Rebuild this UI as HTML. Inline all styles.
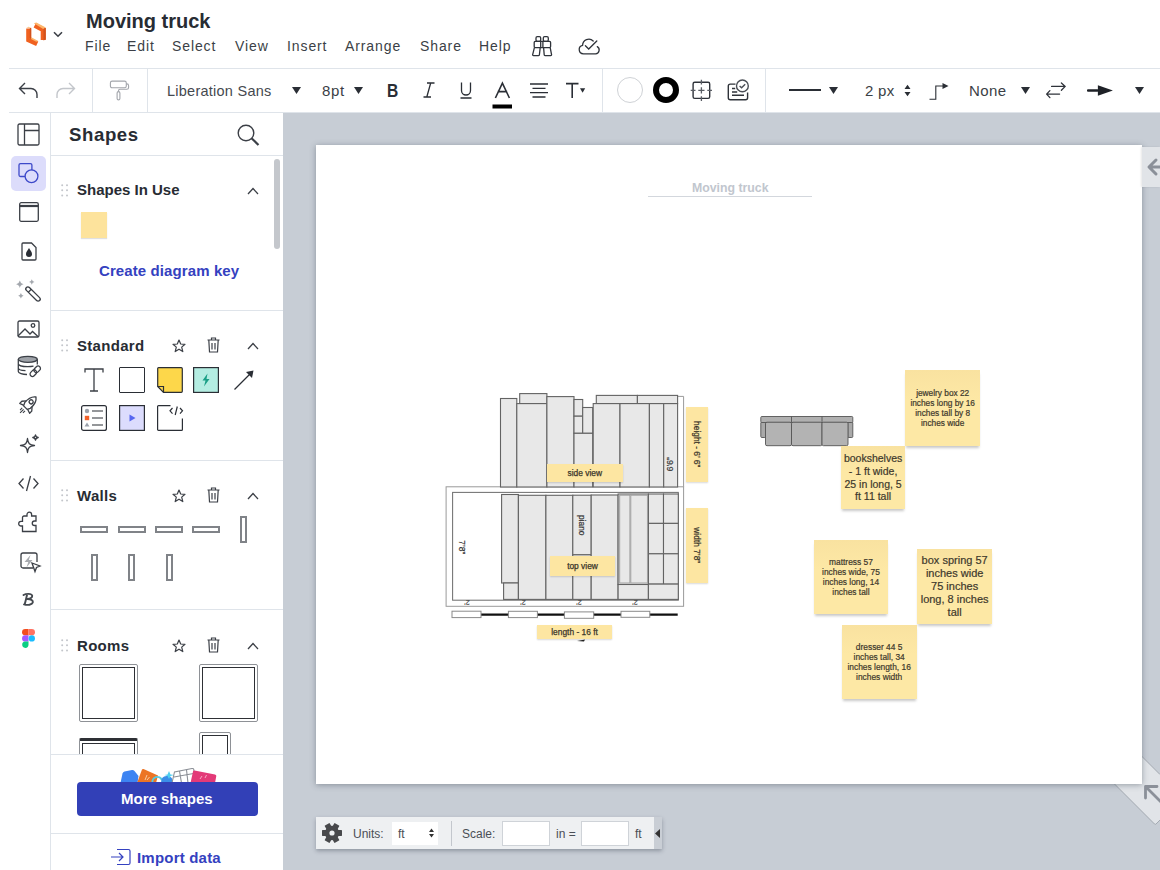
<!DOCTYPE html>
<html><head><meta charset="utf-8">
<style>
*{box-sizing:border-box;margin:0;padding:0}
html,body{width:1160px;height:870px;overflow:hidden;background:#fff;font-family:"Liberation Sans",sans-serif;color:#2a2e35}
.a{position:absolute}
.t{position:absolute;white-space:pre;line-height:1}
svg{position:absolute;overflow:visible}
</style></head><body>
<!-- HEADER -->
<div class="t" style="left:86px;top:11px;font-size:20px;font-weight:bold;color:#282c33">Moving truck</div>
<div class="t" style="left:85px;top:39px;font-size:14px;letter-spacing:0.9px;color:#3b3f46">File</div>
<div class="t" style="left:127px;top:39px;font-size:14px;letter-spacing:0.9px;color:#3b3f46">Edit</div>
<div class="t" style="left:172px;top:39px;font-size:14px;letter-spacing:0.9px;color:#3b3f46">Select</div>
<div class="t" style="left:235px;top:39px;font-size:14px;letter-spacing:0.9px;color:#3b3f46">View</div>
<div class="t" style="left:287px;top:39px;font-size:14px;letter-spacing:0.9px;color:#3b3f46">Insert</div>
<div class="t" style="left:345px;top:39px;font-size:14px;letter-spacing:0.9px;color:#3b3f46">Arrange</div>
<div class="t" style="left:420px;top:39px;font-size:14px;letter-spacing:0.9px;color:#3b3f46">Share</div>
<div class="t" style="left:479px;top:39px;font-size:14px;letter-spacing:0.9px;color:#3b3f46">Help</div>


<!-- logo -->
<svg style="left:22px;top:18px" width="30" height="30" viewBox="0 0 30 30">
  <path d="M6.7 10.5 V21.8 L15.2 25.8" fill="none" stroke="#f0611f" stroke-width="5" stroke-linejoin="miter"/>
  <path d="M4.2 9.8 L6.7 8.8 L9.2 9.8 Z M9.2 19.3 L16.3 22.9 L14.3 23.8 L7.5 20.3 Z" fill="#fdb56b"/>
  <path d="M12.8 7.3 L21.2 11.8 V22" fill="none" stroke="#f0611f" stroke-width="5" stroke-linejoin="miter"/>
  <path d="M11.8 5.3 L14.3 4.6 L23.8 9.6 L21.2 10.9 Z" fill="#fdb56b"/>
  <path d="M21.5 11 L23.8 9.8 V21.5 L21.5 22.5 Z" fill="#d2521c"/>
  <path d="M7.8 10.2 L9.2 9.8 V20.5 L7.8 21.2 Z" fill="#d2521c"/>
</svg>
<svg style="left:53px;top:31px" width="10" height="7" viewBox="0 0 10 7"><path d="M1 1.2 L5 5.2 L9 1.2" fill="none" stroke="#3b3f46" stroke-width="1.6"/></svg>
<!-- binoculars -->
<svg style="left:525px;top:30px" width="30" height="30" viewBox="0 0 30 30" fill="none" stroke="#2f333a" stroke-width="1.3" stroke-linejoin="round">
  <rect x="11" y="6.6" width="4.7" height="4.8" rx="1.3"/><rect x="18.3" y="6.6" width="5" height="4.8" rx="1.3"/>
  <rect x="9.2" y="11.4" width="16.4" height="6.2" rx="1"/><path d="M15.7 11.4 V17.6 M17.9 11.4 V17.6"/>
  <path d="M9.4 17.6 L7.6 24.8 A0.8 0.8 0 0 0 8.4 25.6 H13.6 A0.8 0.8 0 0 0 14.4 24.8 L15.2 17.6 M18.6 17.6 L19.2 24.8 A0.8 0.8 0 0 0 20 25.6 H25.8 A0.8 0.8 0 0 0 26.6 24.8 L25.2 17.6"/>
</svg>
<!-- cloud check -->
<svg style="left:578px;top:38px" width="24" height="18" viewBox="0 0 24 18" fill="none" stroke="#2f333a" stroke-width="1.3" stroke-linecap="round">
  <path d="M15.2 3 A6.2 6.2 0 0 0 4.6 7.3 A4.3 4.3 0 0 0 5.4 15.8 H17.6 A3.9 3.9 0 0 0 19.3 8.6"/>
  <path d="M7.4 7.8 L10.7 11 L18.8 3"/>
</svg>
<!-- TOOLBAR borders -->
<div class="a" style="left:9px;top:68px;width:1151px;height:1px;background:#dfe4ea"></div>
<div class="a" style="left:9px;top:112px;width:1151px;height:1px;background:#dfe4ea"></div>
<div class="a" style="left:92px;top:68px;width:1px;height:44px;background:#dfe4ea"></div>
<div class="a" style="left:147px;top:68px;width:1px;height:44px;background:#dfe4ea"></div>
<div class="a" style="left:602px;top:68px;width:1px;height:44px;background:#dfe4ea"></div>
<div class="a" style="left:765px;top:68px;width:1px;height:44px;background:#dfe4ea"></div>
<div class="t" style="left:167px;top:84px;font-size:14.5px;letter-spacing:0.25px;color:#45494f">Liberation Sans</div>


<!-- undo / redo -->
<svg style="left:18px;top:82px" width="22" height="17" viewBox="0 0 22 17" fill="none" stroke="#3b3f46" stroke-width="1.4">
  <path d="M7 1 L1.5 6.5 L7 12 M1.5 6.5 H13 A6 6 0 0 1 19 12.5 V16"/>
</svg>
<svg style="left:54px;top:82px" width="22" height="17" viewBox="0 0 22 17" fill="none" stroke="#c3c6cb" stroke-width="1.4">
  <path d="M15 1 L20.5 6.5 L15 12 M20.5 6.5 H9 A6 6 0 0 0 3 12.5 V16"/>
</svg>
<!-- paint roller -->
<svg style="left:109px;top:80px" width="22" height="22" viewBox="0 0 22 22" fill="none" stroke="#a2a5ab" stroke-width="1.1">
  <rect x="1.4" y="1.1" width="15.9" height="6.7" rx="1.8"/>
  <path d="M17.3 3.9 H17.8 A1.8 1.8 0 0 1 19.6 5.7 V7.4 A1.8 1.8 0 0 1 17.8 9.2 H11 A1.5 1.5 0 0 0 9.5 10.7 V11.6"/>
  <rect x="8.1" y="11.6" width="2.8" height="8.3" rx="1.4"/>
</svg>
<!-- font dropdown arrow -->
<svg style="left:292px;top:87px" width="9" height="7" viewBox="0 0 9 7"><path d="M0 0 H9 L4.5 7 Z" fill="#2a2e35"/></svg>
<div class="t" style="left:322px;top:83px;font-size:15px;letter-spacing:0.7px;color:#3a3e45">8pt</div>
<svg style="left:354px;top:87px" width="9" height="7" viewBox="0 0 9 7"><path d="M0 0 H9 L4.5 7 Z" fill="#2a2e35"/></svg>
<div class="t" style="left:386.5px;top:81px;font-size:19px;font-weight:bold;color:#2a2e35;transform:scaleX(0.82);transform-origin:0 0">B</div>
<svg style="left:423px;top:82px" width="12" height="16" viewBox="0 0 12 16" fill="none" stroke="#2a2e35" stroke-width="1.3"><path d="M4 1 H11.5 M0.5 15 H8 M7.7 1 L3.8 15"/></svg>
<svg style="left:460px;top:82px" width="12" height="17" viewBox="0 0 12 17" fill="none" stroke="#2a2e35" stroke-width="1.3"><path d="M1.5 0.5 V8.5 A4.5 4.5 0 0 0 10.5 8.5 V0.5 M0.5 16 H11.5"/></svg>
<svg style="left:492px;top:81px" width="20" height="28" viewBox="0 0 20 28"><path d="M3.4 17 L10.4 2.2 L17.4 17 M5.6 10.6 H15.2" fill="none" stroke="#2a2e35" stroke-width="1.6"/><rect x="0.5" y="23.5" width="19.5" height="4" fill="#000"/></svg>
<svg style="left:530px;top:83px" width="18" height="15" viewBox="0 0 18 15" fill="none" stroke="#2a2e35" stroke-width="1.3"><path d="M0 1 H18 M2.5 5.3 H15.5 M0 9.6 H18 M2.5 14 H15.5"/></svg>
<svg style="left:565px;top:82px" width="22" height="17" viewBox="0 0 22 17"><path d="M1 1.6 H13.5 M7.2 1.6 V16" fill="none" stroke="#2a2e35" stroke-width="1.6"/><path d="M15 6.2 H20.2 L17.6 10.7 Z" fill="#2a2e35"/></svg>
<!-- fill circle / line ring -->
<div class="a" style="left:617px;top:77px;width:26px;height:26px;border-radius:50%;border:1px solid #cfd2d6;background:#fff"></div>
<div class="a" style="left:653px;top:77px;width:26px;height:26px;border-radius:50%;border:6px solid #000;background:#fff"></div>
<!-- crosshair -->
<svg style="left:688px;top:78px" width="26" height="26" viewBox="0 0 26 26" fill="none" stroke="#2f333a" stroke-width="1.4">
  <rect x="5.1" y="4.3" width="16.6" height="16.1" rx="1.6"/>
  <path d="M13.4 1.7 V6.5 M13.4 18.3 V23 M2.7 12.3 H7.5 M19.3 12.3 H24 M10.3 12.3 H16.5 M13.4 9.2 V15.4" stroke="#5a5e65" stroke-width="1.3"/>
</svg>
<!-- card check -->
<svg style="left:726px;top:76px" width="26" height="26" viewBox="0 0 26 26" fill="none" stroke="#2f333a" stroke-width="1.4">
  <path d="M9.5 8.1 H4.3 A2 2 0 0 0 2.3 10.1 V21.8 A2 2 0 0 0 4.3 23.8 H19.6 A2 2 0 0 0 21.6 21.8 V16.5"/>
  <circle cx="16.4" cy="9.9" r="5.9" stroke="#4a4e55"/><path d="M13.6 10 L15.6 11.8 L19.2 8.2" stroke="#4a4e55"/>
  <path d="M6 12.5 H9.2 M6 16 H11.2 M6 19.3 H18" stroke-width="1.5"/>
</svg>
<!-- line style -->
<div class="a" style="left:789px;top:89px;width:32px;height:2px;background:#2a2e35"></div>
<svg style="left:829px;top:87px" width="9" height="7" viewBox="0 0 9 7"><path d="M0 0 H9 L4.5 7 Z" fill="#2a2e35"/></svg>
<div class="t" style="left:865px;top:83px;font-size:15px;letter-spacing:0.3px;color:#3b3f46">2 px</div>
<svg style="left:904px;top:84px" width="7" height="13" viewBox="0 0 7 13"><path d="M0.5 5 H6.5 L3.5 0.8 Z M0.5 8 H6.5 L3.5 12.2 Z" fill="#2a2e35"/></svg>
<!-- elbow connector -->
<svg style="left:929px;top:81px" width="21" height="19" viewBox="0 0 21 19" fill="none" stroke="#2a2e35" stroke-width="1.1">
  <path d="M0.5 18.3 H6.8 V5 H14"/><path d="M13.5 2 L19.5 5 L13.5 8 Z" fill="#2a2e35" stroke="none"/>
</svg>
<div class="t" style="left:969px;top:83px;font-size:15px;letter-spacing:0.4px;color:#3b3f46">None</div>
<svg style="left:1021px;top:87px" width="9" height="7" viewBox="0 0 9 7"><path d="M0 0 H9 L4.5 7 Z" fill="#2a2e35"/></svg>
<!-- swap -->
<svg style="left:1046px;top:82px" width="21" height="17" viewBox="0 0 21 17" fill="none" stroke="#2f333a" stroke-width="1.3" stroke-linecap="round" stroke-linejoin="round">
  <path d="M5.6 4.4 H19.2 M15.4 1 L19.2 4.4 L15.4 8.2 M13.6 12.1 H0.6 M3.9 8.6 L0.6 12.1 L3.9 15.6"/>
</svg>
<!-- arrow end -->
<svg style="left:1087px;top:84px" width="27" height="13" viewBox="0 0 27 13"><rect x="0" y="5.3" width="11.5" height="2.4" rx="1" fill="#1e2127"/><path d="M10.9 1.3 L25.9 6.5 L10.9 11.7 Z" fill="#1e2127"/></svg>
<svg style="left:1135px;top:87px" width="9" height="7" viewBox="0 0 9 7"><path d="M0 0 H9 L4.5 7 Z" fill="#2a2e35"/></svg>
<!-- LEFT RAIL + SIDEBAR -->
<!-- rail icons -->
<div class="a" style="left:11px;top:156px;width:35px;height:35px;border-radius:5px;background:#dcdcfb"></div>

<svg style="left:17px;top:123px" width="23" height="23" viewBox="0 0 23 23" fill="none" stroke="#3b3f46" stroke-width="1.3">
  <rect x="1" y="1" width="21" height="21" rx="1.5"/><path d="M7.5 1 V22 M7.5 7.5 H22"/>
</svg>
<svg style="left:18px;top:163px" width="22" height="22" viewBox="0 0 22 22" fill="none" stroke="#3d49c9" stroke-width="1.3">
  <path d="M13.9 7.2 V2.1 A1.5 1.5 0 0 0 12.4 0.6 H2.5 A1.5 1.5 0 0 0 1 2.1 V12 A1.5 1.5 0 0 0 2.5 13.5 H7.2"/>
  <circle cx="13.5" cy="13.2" r="6.4"/>
</svg>
<svg style="left:19px;top:202px" width="20" height="20" viewBox="0 0 20 20" fill="none" stroke="#3b3f46" stroke-width="1.3">
  <rect x="0.7" y="0.7" width="18.6" height="18.6" rx="1.5"/><path d="M0.7 4 H19.3" stroke-width="2.2"/>
</svg>
<svg style="left:21px;top:242px" width="16" height="19" viewBox="0 0 16 19" fill="none" stroke="#3b3f46" stroke-width="1.3">
  <path d="M1 2 A1 1 0 0 1 2 1 H10.5 L15 5.5 V17 A1 1 0 0 1 14 18 H2 A1 1 0 0 1 1 17 Z"/>
  <path d="M8 6 C9.5 8.5 11 10 11 12 A3 3 0 0 1 5 12 C5 10 6.5 8.5 8 6 Z" fill="#2a2e35" stroke="none"/>
</svg>
<svg style="left:14px;top:278px" width="28" height="26" viewBox="0 0 28 26">
  <path d="M5.8 2.5 Q6.4 5.6 9.5 6.2 Q6.4 6.8 5.8 9.9 Q5.2 6.8 2.1 6.2 Q5.2 5.6 5.8 2.5 Z M17.8 1.3 Q18.2 3.6 20.5 4 Q18.2 4.4 17.8 6.7 Q17.4 4.4 15.1 4 Q17.4 3.6 17.8 1.3 Z M6.9 15.1 Q7.3 17.4 9.6 17.8 Q7.3 18.2 6.9 20.5 Q6.5 18.2 4.2 17.8 Q6.5 17.4 6.9 15.1 Z" fill="#a3a7ad"/>
  <g transform="translate(19 16) rotate(45)" fill="none" stroke="#3b3f46" stroke-width="1.3"><rect x="-9.3" y="-2.1" width="18.6" height="4.2" rx="2.1"/><path d="M-4.5 -2.1 V2.1"/></g>
</svg>
<svg style="left:17px;top:320px" width="23" height="18" viewBox="0 0 23 18" fill="none" stroke="#3b3f46" stroke-width="1.3">
  <rect x="1" y="1" width="21" height="16" rx="1.5"/><path d="M1 16 L8 9 L13 14 L15.5 11.5 L21.5 17"/><circle cx="16" cy="5.5" r="1.8"/>
</svg>
<svg style="left:16px;top:355px" width="27" height="24" viewBox="0 0 27 24" fill="none" stroke="#3b3f46" stroke-width="1.3">
  <ellipse cx="11.8" cy="4.3" rx="9.5" ry="3" fill="#9ea2a8"/>
  <path d="M2.3 4.3 V16.5 C2.3 18.2 6.5 19.5 11 19.5 M21.3 4.3 V9.5 M2.3 8.7 C2.3 10.4 6.5 11.7 11.8 11.7 C14 11.7 16 11.5 17.5 11.2 M2.3 12.9 C2.3 14.4 5 15.4 9.5 15.7"/>
  <g transform="translate(17.3 18.2) rotate(-45)"><rect x="-3.6" y="-2.4" width="7.2" height="4.8" rx="2.4" fill="#fff"/></g>
  <g transform="translate(21.2 14.3) rotate(-45)"><rect x="-3.6" y="-2.4" width="7.2" height="4.8" rx="2.4" fill="none"/></g>
</svg>
<svg style="left:15px;top:393px" width="25" height="25" viewBox="0 0 25 25" fill="none" stroke="#3b3f46" stroke-width="1.3" stroke-linejoin="round">
  <g transform="rotate(45 12.5 12.5) translate(0.5 -0.5)">
  <path d="M12 1 C15.5 3.5 16.5 8 16 13 L14.5 16 H9.5 L8 13 C7.5 8 8.5 3.5 12 1 Z"/>
  <path d="M8 10.5 L5 14 V17 L9.3 15.6 M16 10.5 L19 14 V17 L14.7 15.6"/>
  <circle cx="12" cy="7.8" r="2"/>
  <path d="M10 18.5 V21.5 M12 18.5 V23.5 M14 18.5 V21.5" stroke-width="1.1"/>
  </g>
</svg>
<svg style="left:19px;top:434px" width="21" height="21" viewBox="0 0 21 21" fill="none" stroke="#3b3f46" stroke-width="1.3" stroke-linejoin="round">
  <path d="M8.5 4.5 C9 9.5 10.5 11 15.5 11.5 C10.5 12 9 13.5 8.5 18.5 C8 13.5 6.5 12 1.5 11.5 C6.5 11 8 9.5 8.5 4.5 Z"/>
  <path d="M16.5 0.8 C16.7 2.8 17.2 3.3 19.2 3.5 C17.2 3.7 16.7 4.2 16.5 6.2 C16.3 4.2 15.8 3.7 13.8 3.5 C15.8 3.3 16.3 2.8 16.5 0.8 Z"/>
</svg>
<svg style="left:18px;top:475px" width="21" height="17" viewBox="0 0 21 17" fill="none" stroke="#3b3f46" stroke-width="1.3">
  <path d="M5.5 3.5 L1 8.5 L5.5 13.5 M15.5 3.5 L20 8.5 L15.5 13.5 M12.5 1 L8.5 16"/>
</svg>
<svg style="left:17px;top:511px" width="21" height="22" viewBox="0 0 21 22" fill="none" stroke="#3b3f46" stroke-width="1.3">
  <path d="M7 5 H10 V3.5 A2.3 2.3 0 0 1 14.6 3.5 V5 H19 V10 H17.5 A2 2 0 0 0 17.5 14.5 H19 V20.5 H5.5 V15 H4 A2.3 2.3 0 0 1 4 10.4 H5.5 V6.5 A1.5 1.5 0 0 1 7 5 Z"/>
</svg>
<svg style="left:20px;top:552px" width="21" height="21" viewBox="0 0 21 21" fill="none" stroke="#3b3f46" stroke-width="1.3">
  <path d="M13 16 H3 A2 2 0 0 1 1 14 V3 A2 2 0 0 1 3 1 H15 A2 2 0 0 1 17 3 V10"/>
  <path d="M10.5 3 L4.5 10 H8.3 L6.5 15.5 L12.5 8 H8.8 Z" fill="#a8abb0" stroke="none"/>
  <path d="M12 11 L20 14 L16.5 15.5 L15 19.5 Z" fill="#fff"/>
</svg>
<svg style="left:21px;top:592px" width="15" height="15" viewBox="0 0 15 15" fill="none" stroke="#45494f" stroke-width="1.9" stroke-linecap="round" stroke-linejoin="round">
  <path d="M2.5 3 C5 1.5 10.5 1.2 11.2 3.6 C11.8 5.8 8.5 6.8 6.5 7 C9.5 7 12.5 8 11.8 10.6 C11.2 12.8 6.5 13.4 3 12.4 M6 3 C5.2 6.3 4.6 9.3 3.6 12.6"/>
</svg>
<svg style="left:22px;top:629px" width="13" height="19" viewBox="0 0 13 19">
  <path d="M3.2 0 H6.5 V6.3 H3.2 A3.15 3.15 0 0 1 3.2 0 Z" fill="#f24e1e"/>
  <path d="M6.5 0 H9.8 A3.15 3.15 0 0 1 9.8 6.3 H6.5 Z" fill="#ff7262"/>
  <path d="M3.2 6.3 H6.5 V12.6 H3.2 A3.15 3.15 0 0 1 3.2 6.3 Z" fill="#a259ff"/>
  <circle cx="9.8" cy="9.45" r="3.15" fill="#1abcfe"/>
  <path d="M3.2 12.6 H6.5 V15.8 A3.15 3.15 0 1 1 3.2 12.6 Z" fill="#0acf83"/>
</svg>

<div class="a" style="left:50px;top:113px;width:1px;height:757px;background:#dfe4ea"></div>
<div class="t" style="left:69px;top:126px;font-size:18.6px;font-weight:bold;letter-spacing:0.6px;color:#282c33">Shapes</div>
<div class="a" style="left:51px;top:155px;width:232px;height:1px;background:#dfe4ea"></div>


<!-- search -->
<svg style="left:237px;top:124px" width="23" height="22" viewBox="0 0 23 22" fill="none" stroke="#3b3f46" stroke-width="1.4">
  <circle cx="9" cy="9" r="7.8"/><path d="M14.8 14.5 L21.5 21" stroke-width="2.2"/>
</svg>
<!-- scrollbar thumb -->
<div class="a" style="left:274px;top:159px;width:6px;height:90px;border-radius:3px;background:#c4c7cc"></div>

<!-- Shapes In Use -->
<svg style="left:61px;top:184px" width="8" height="14" viewBox="0 0 8 14" fill="#c3c6cb"><circle cx="1.2" cy="1.2" r="1"/><circle cx="6" cy="1.2" r="1"/><circle cx="1.2" cy="6.3" r="1"/><circle cx="6" cy="6.3" r="1"/><circle cx="1.2" cy="11.4" r="1"/><circle cx="6" cy="11.4" r="1"/></svg>
<div class="t" style="left:77px;top:182px;font-size:15px;font-weight:bold;color:#282c33">Shapes In Use</div>
<svg style="left:247px;top:187px" width="12" height="8" viewBox="0 0 12 8"><path d="M1 7 L6 1.5 L11 7" fill="none" stroke="#3b3f46" stroke-width="1.3"/></svg>
<div class="a" style="left:81px;top:212px;width:26px;height:26px;background:#fde39c;box-shadow:0 1px 1px rgba(0,0,0,.12)"></div>
<div class="t" style="left:99px;top:263px;font-size:15px;font-weight:bold;letter-spacing:0.1px;color:#3441c0">Create diagram key</div>
<div class="a" style="left:51px;top:310px;width:232px;height:1px;background:#dfe4ea"></div>

<!-- Standard -->
<svg style="left:61px;top:339px" width="8" height="14" viewBox="0 0 8 14" fill="#c3c6cb"><circle cx="1.2" cy="1.2" r="1"/><circle cx="6" cy="1.2" r="1"/><circle cx="1.2" cy="6.3" r="1"/><circle cx="6" cy="6.3" r="1"/><circle cx="1.2" cy="11.4" r="1"/><circle cx="6" cy="11.4" r="1"/></svg>
<div class="t" style="left:77px;top:338px;font-size:15px;font-weight:bold;letter-spacing:0.3px;color:#282c33">Standard</div>
<svg style="left:172px;top:339px" width="14" height="14" viewBox="0 0 14 14"><path d="M7 1 L8.7 5 L13 5.3 L9.7 8.1 L10.8 12.6 L7 10.2 L3.2 12.6 L4.3 8.1 L1 5.3 L5.3 5 Z" fill="none" stroke="#3b3f46" stroke-width="1.2" stroke-linejoin="round"/></svg>
<svg style="left:207px;top:337px" width="13" height="16" viewBox="0 0 13 16" fill="none" stroke="#3b3f46" stroke-width="1.2"><path d="M0.5 3 H12.5 M4.5 3 V1 H8.5 V3 M1.8 3 L2.5 15 H10.5 L11.2 3 M5 6 V12.5 M8 6 V12.5"/></svg>
<svg style="left:247px;top:342px" width="12" height="8" viewBox="0 0 12 8"><path d="M1 7 L6 1.5 L11 7" fill="none" stroke="#3b3f46" stroke-width="1.3"/></svg>
<!-- standard shapes -->
<svg style="left:84px;top:368px" width="20" height="24" viewBox="0 0 20 24" fill="none" stroke="#3b3f46" stroke-width="1.3"><path d="M1 4.5 V1 H19 V4.5 M10 1 V23 M6 23 H14"/></svg>
<div class="a" style="left:119px;top:367px;width:26px;height:26px;border:1.3px solid #2a2e35;border-radius:1px;background:#fff"></div>
<svg style="left:157px;top:367px" width="26" height="26" viewBox="0 0 26 26"><path d="M1.5 0.7 H24.3 A1 1 0 0 1 25.3 1.7 V24.3 A1 1 0 0 1 24.3 25.3 H6.5 L0.7 19.5 V1.5 A0.8 0.8 0 0 1 1.5 0.7 Z" fill="#fdd74a" stroke="#2a2e35" stroke-width="1.2"/><path d="M0.7 19.5 H6.5 V25.3" fill="none" stroke="#2a2e35" stroke-width="1.2"/></svg>
<svg style="left:193px;top:367px" width="26" height="26" viewBox="0 0 26 26"><rect x="0.6" y="0.6" width="24.8" height="24.8" fill="#b4ede2" stroke="#2a2e35" stroke-width="1.2"/><path d="M14.5 6.5 L9.5 13.5 H12.5 L11 19.5 L16.5 12 H13.5 Z" fill="#1a9f86"/></svg>
<svg style="left:234px;top:370px" width="20" height="20" viewBox="0 0 20 20"><path d="M0.5 19.5 L16 4" stroke="#2a2e35" stroke-width="1.3"/><path d="M12 2 L19.5 0.5 L18 8 Z" fill="#2a2e35"/></svg>
<svg style="left:81px;top:405px" width="26" height="26" viewBox="0 0 26 26"><rect x="0.6" y="0.6" width="24.8" height="24.8" rx="2" fill="#fff" stroke="#2a2e35" stroke-width="1.2"/><circle cx="6" cy="6" r="2.2" fill="#9ba1ab"/><rect x="3.8" y="10.8" width="4.4" height="4.4" fill="#f2612a"/><path d="M6 17.5 L8.5 21.5 H3.5 Z" fill="#9ba1ab"/><path d="M11 6 H22 M11 13 H22 M11 20 H22" stroke="#2a2e35" stroke-width="1.2"/></svg>
<svg style="left:119px;top:405px" width="26" height="26" viewBox="0 0 26 26"><rect x="0.6" y="0.6" width="24.8" height="24.8" fill="#dcdcfd" stroke="#2a2e35" stroke-width="1.2"/><path d="M10.5 9.5 L16.5 13 L10.5 16.5 Z" fill="#5767f0"/></svg>
<svg style="left:157px;top:405px" width="27" height="26" viewBox="0 0 27 26" fill="none" stroke="#2a2e35" stroke-width="1.2"><path d="M13.5 0.6 H1.5 A0.9 0.9 0 0 0 0.6 1.5 V24.5 A0.9 0.9 0 0 0 1.5 25.4 H24.5 A0.9 0.9 0 0 0 25.4 24.5 V13.5"/><path d="M15.5 3 L13 5.8 L15.5 8.6 M23 3 L25.5 5.8 L23 8.6 M20.3 1.5 L18.2 10"/></svg>
<div class="a" style="left:51px;top:460px;width:232px;height:1px;background:#dfe4ea"></div>

<!-- Walls -->
<svg style="left:61px;top:489px" width="8" height="14" viewBox="0 0 8 14" fill="#c3c6cb"><circle cx="1.2" cy="1.2" r="1"/><circle cx="6" cy="1.2" r="1"/><circle cx="1.2" cy="6.3" r="1"/><circle cx="6" cy="6.3" r="1"/><circle cx="1.2" cy="11.4" r="1"/><circle cx="6" cy="11.4" r="1"/></svg>
<div class="t" style="left:77px;top:488px;font-size:15px;font-weight:bold;letter-spacing:0.3px;color:#282c33">Walls</div>
<svg style="left:172px;top:489px" width="14" height="14" viewBox="0 0 14 14"><path d="M7 1 L8.7 5 L13 5.3 L9.7 8.1 L10.8 12.6 L7 10.2 L3.2 12.6 L4.3 8.1 L1 5.3 L5.3 5 Z" fill="none" stroke="#3b3f46" stroke-width="1.2" stroke-linejoin="round"/></svg>
<svg style="left:207px;top:487px" width="13" height="16" viewBox="0 0 13 16" fill="none" stroke="#3b3f46" stroke-width="1.2"><path d="M0.5 3 H12.5 M4.5 3 V1 H8.5 V3 M1.8 3 L2.5 15 H10.5 L11.2 3 M5 6 V12.5 M8 6 V12.5"/></svg>
<svg style="left:247px;top:492px" width="12" height="8" viewBox="0 0 12 8"><path d="M1 7 L6 1.5 L11 7" fill="none" stroke="#3b3f46" stroke-width="1.3"/></svg>
<div class="a" style="left:80px;top:526px;width:28px;height:7px;border:2px solid #808388;background:#fff"></div>
<div class="a" style="left:118px;top:526px;width:28px;height:7px;border:2px solid #808388;background:#fff"></div>
<div class="a" style="left:155px;top:526px;width:28px;height:7px;border:2px solid #808388;background:#fff"></div>
<div class="a" style="left:192px;top:526px;width:28px;height:7px;border:2px solid #808388;background:#fff"></div>
<div class="a" style="left:240px;top:516px;width:7px;height:27px;border:2px solid #808388;background:#fff"></div>
<div class="a" style="left:91px;top:554px;width:7px;height:27px;border:2px solid #808388;background:#fff"></div>
<div class="a" style="left:128px;top:554px;width:7px;height:27px;border:2px solid #808388;background:#fff"></div>
<div class="a" style="left:166px;top:554px;width:7px;height:27px;border:2px solid #808388;background:#fff"></div>
<div class="a" style="left:51px;top:609px;width:232px;height:1px;background:#dfe4ea"></div>

<!-- Rooms -->
<svg style="left:61px;top:639px" width="8" height="14" viewBox="0 0 8 14" fill="#c3c6cb"><circle cx="1.2" cy="1.2" r="1"/><circle cx="6" cy="1.2" r="1"/><circle cx="1.2" cy="6.3" r="1"/><circle cx="6" cy="6.3" r="1"/><circle cx="1.2" cy="11.4" r="1"/><circle cx="6" cy="11.4" r="1"/></svg>
<div class="t" style="left:77px;top:638px;font-size:15px;font-weight:bold;letter-spacing:0.3px;color:#282c33">Rooms</div>
<svg style="left:172px;top:639px" width="14" height="14" viewBox="0 0 14 14"><path d="M7 1 L8.7 5 L13 5.3 L9.7 8.1 L10.8 12.6 L7 10.2 L3.2 12.6 L4.3 8.1 L1 5.3 L5.3 5 Z" fill="none" stroke="#3b3f46" stroke-width="1.2" stroke-linejoin="round"/></svg>
<svg style="left:207px;top:637px" width="13" height="16" viewBox="0 0 13 16" fill="none" stroke="#3b3f46" stroke-width="1.2"><path d="M0.5 3 H12.5 M4.5 3 V1 H8.5 V3 M1.8 3 L2.5 15 H10.5 L11.2 3 M5 6 V12.5 M8 6 V12.5"/></svg>
<svg style="left:247px;top:642px" width="12" height="8" viewBox="0 0 12 8"><path d="M1 7 L6 1.5 L11 7" fill="none" stroke="#3b3f46" stroke-width="1.3"/></svg>
<div class="a" style="left:51px;top:655px;width:232px;height:99px;overflow:hidden">
  <div class="a" style="left:28px;top:9px;width:59px;height:58px;border:1.5px solid #8e9196;border-radius:2px;padding:2px"><div style="width:100%;height:100%;border:1.6px solid #2e3035"></div></div>
  <div class="a" style="left:148px;top:9px;width:59px;height:58px;border:1.5px solid #8e9196;border-radius:2px;padding:2px"><div style="width:100%;height:100%;border:1.6px solid #2e3035"></div></div>
  <div class="a" style="left:28px;top:83px;width:59px;height:40px;border:1.5px solid #8e9196;border-radius:2px;padding:2px;border-top:3px solid #2e3035"><div style="width:100%;height:100%;border:1.6px solid #2e3035"></div></div>
  <div class="a" style="left:148px;top:77px;width:32px;height:40px;border:1.5px solid #8e9196;border-radius:2px;padding:2px"><div style="width:100%;height:100%;border:1.6px solid #2e3035"></div></div>
</div>
<div class="a" style="left:51px;top:754px;width:232px;height:1px;background:#dfe4ea"></div>

<!-- more shapes -->
<svg style="left:120px;top:766px" width="98" height="17" viewBox="0 0 98 17">
  <path d="M0.5 17 L2.5 7.5 Q3 6 4.5 5.6 L12 4 Q13.5 3.8 14.5 5 L18.5 10 L17.5 17 Z" fill="#3d84f2"/>
  <path d="M17 17 L22 3.5 Q22.5 2.6 23.5 3 L38 9.5 L36 17 Z" fill="#ec7424"/>
  <path d="M25 14 L27 9 M27 14 L29.5 11" stroke="#f8c9a0" stroke-width="1"/>
  <path d="M32.5 17 A5 5 0 0 1 42 14" fill="none" stroke="#56c9e0" stroke-width="2"/>
  <path d="M41 17 Q41 9 48 10 Q53 10.5 53 17 Z" fill="#3b8fe8"/>
  <path d="M47.5 8.5 L49 5 L50.5 8.5 L54 9 L50.5 10 L49 13 L47.5 10 L44.5 9 Z" fill="#4fd0f0"/>
  <path d="M52 17 L54.5 6 L72 2.5 Q73.5 2.3 73.8 3.5 L75 17 Z" fill="#fff" stroke="#8b8f96" stroke-width="1.1"/>
  <path d="M54 11 L73.5 7.5 M59.5 5 L61.5 17 M66.5 3.7 L68 17" stroke="#8b8f96" stroke-width="1.1"/>
  <path d="M70.5 17 L73 5.5 Q73.3 4.3 74.5 4.5 L95 8.5 Q96.5 9 96.3 10 L95 17 Z" fill="#e33a78"/>
  <path d="M80 13 L82 10 M85 12 L86.5 9" stroke="#f6a9c5" stroke-width="1"/>
</svg>
<div class="a" style="left:77px;top:782px;width:181px;height:34px;border-radius:4px;background:#3240b7"></div>
<div class="t" style="left:121px;top:791px;font-size:15px;font-weight:bold;color:#fff">More shapes</div>
<div class="a" style="left:51px;top:833px;width:232px;height:1px;background:#dfe4ea"></div>
<svg style="left:110px;top:848px" width="21" height="18" viewBox="0 0 21 18" fill="none" stroke="#3441c0" stroke-width="1.2"><path d="M1 9 H13 M9 5 L13 9 L9 13 M7 1.5 H18.5 A1.5 1.5 0 0 1 20 3 V15 A1.5 1.5 0 0 1 18.5 16.5 H7"/></svg>
<div class="t" style="left:137px;top:850px;font-size:15px;font-weight:bold;letter-spacing:0.2px;color:#3441c0">Import data</div>
<!-- CANVAS -->
<div class="a" style="left:283px;top:113px;width:877px;height:757px;background:#c7cdd5"></div>
<svg style="left:1090px;top:700px" width="70" height="130" viewBox="1090 700 70 130">
  <path d="M1090 759.5 L1154.5 824 Q1155.25 824.75 1156 824 L1160 820 V774.5 L1090 704.5 Z" fill="#e1e4e8"/>
  <path d="M1090 759.5 L1154.5 824 Q1155.25 824.75 1156 824 L1160 820 M1160 774.5 L1090 704.5" fill="none" stroke="#a3a9b1" stroke-width="1"/>
</svg>
<div class="a" style="left:316px;top:145px;width:826px;height:639px;background:#fff;box-shadow:0 1px 6px rgba(60,70,85,.45)"></div>

<!-- page title -->
<div class="t" style="left:692px;top:182px;font-size:12.3px;font-weight:bold;color:#c1c6ce">Moving truck</div>
<div class="a" style="left:648px;top:196px;width:164px;height:1px;background:#d3d7dd"></div>
<svg style="left:0;top:0" width="1160" height="870" viewBox="0 0 1160 870">
<g fill="none" stroke="#9a9a9a" stroke-width="1"><rect x="446.1" y="486.8" width="237.5" height="119.5"/></g>
<path d="M677.6 396.4 H683.6 V486.8" fill="none" stroke="#9a9a9a" stroke-width="1"/>
<g fill="#fff" stroke="#727272" stroke-width="1.05"><rect x="452.6" y="492.4" width="225.7" height="107.8"/></g>
<g fill="#e8e8e8" stroke="#636363" stroke-width="1.1"><rect x="500.5" y="398.5" width="16.3" height="88.5"/><rect x="519.7" y="393.6" width="27.2" height="10.0"/><rect x="516.8" y="403.6" width="30.1" height="83.4"/><rect x="546.9" y="396.6" width="27.1" height="90.4"/><rect x="574" y="399.5" width="8.7" height="16.7"/><rect x="574" y="416.2" width="8.7" height="17.1"/><rect x="582.7" y="407.5" width="10.0" height="25.8"/><rect x="574" y="433.3" width="18.7" height="53.7"/><rect x="596.3" y="395.4" width="41.1" height="8.2"/><rect x="637.4" y="395.4" width="40.2" height="8.2"/><rect x="593.2" y="403.6" width="26.8" height="83.4"/><rect x="620" y="403.6" width="29.4" height="83.4"/><rect x="649.4" y="403.6" width="14.3" height="83.4"/><rect x="663.7" y="403.6" width="13.9" height="83.4"/><rect x="501.6" y="494.5" width="16.8" height="88.5"/><rect x="503.6" y="583" width="14.8" height="16.4"/><rect x="518.4" y="495.3" width="27.5" height="104.1"/><rect x="545.9" y="495.3" width="26.9" height="104.1"/><rect x="572.8" y="495.2" width="18.4" height="59.6"/><rect x="572.8" y="554.8" width="18.4" height="44.6"/><rect x="591.2" y="495" width="26.9" height="104.4"/><rect x="618.1" y="494" width="30.3" height="90.5"/><rect x="618.1" y="584.5" width="30.3" height="14.9"/><rect x="648.4" y="494" width="15.1" height="29.4"/><rect x="663.5" y="494" width="14.8" height="29.4"/><rect x="648.4" y="523.4" width="15.1" height="30.4"/><rect x="663.5" y="523.4" width="14.8" height="30.4"/><rect x="648.4" y="553.8" width="15.1" height="30.3"/><rect x="663.5" y="553.8" width="14.8" height="30.3"/><rect x="648.4" y="584.1" width="29.9" height="15.3"/></g>
<g fill="#e8e8e8" stroke="#9a9a9a" stroke-width="0.9"><rect x="619.7" y="495.2" width="10.2" height="87.8"/><rect x="630.8" y="495.2" width="16.6" height="87.8"/></g>
<path d="M452 614.6 H677.7" stroke="#111" stroke-width="2.4"/>
<g fill="#fff" stroke="#8a8a8a" stroke-width="1"><rect x="452" y="611.2" width="29" height="6.4"/><rect x="508.4" y="611.3" width="29.0" height="6.3"/><rect x="564.4" y="611.9" width="29.3" height="6.4"/><rect x="621" y="611.3" width="28.8" height="6.0"/></g>
<path d="M577 641 L585 639.5 L584 641.5 Z" fill="#222"/>
<g stroke="#555" stroke-width="0.9">
<rect x="760.8" y="422" width="5" height="15.5" rx="1" fill="#a9a9a9"/>
<rect x="847.8" y="422" width="5" height="15.5" rx="1" fill="#a9a9a9"/>
<rect x="760.8" y="416.5" width="92" height="6" rx="1" fill="#b0b0b0"/>
<rect x="765.5" y="422.2" width="26" height="23.5" rx="1.5" fill="#b3b3b3"/>
<rect x="791.5" y="422.2" width="30.5" height="23.5" rx="1.5" fill="#b3b3b3"/>
<rect x="822" y="422.2" width="26" height="23.5" rx="1.5" fill="#b3b3b3"/>
</g>
<path d="M791.5 416.5 V422 M822 416.5 V422" stroke="#555" stroke-width="0.9"/>
</svg>
<div class="a" style="left:547px;top:463.8px;width:75.6px;height:18.1px;background:#fde6a2;box-shadow:0 1px 1.5px rgba(0,0,0,.15);display:flex;align-items:center;justify-content:center;font-size:8.4px;line-height:1;color:#3a352a;-webkit-text-stroke:0.25px #3a352a;white-space:nowrap">side view</div>
<div class="a" style="left:549.8px;top:555.8px;width:65.4px;height:19.9px;background:#fde6a2;box-shadow:0 1px 1.5px rgba(0,0,0,.15);display:flex;align-items:center;justify-content:center;font-size:8.4px;line-height:1;color:#3a352a;-webkit-text-stroke:0.25px #3a352a;white-space:nowrap">top view</div>
<div class="a" style="left:537.2px;top:624.6px;width:74.7px;height:14.6px;background:#fde6a2;box-shadow:0 1px 1.5px rgba(0,0,0,.15);display:flex;align-items:center;justify-content:center;font-size:8.4px;line-height:1;color:#3a352a;-webkit-text-stroke:0.25px #3a352a;white-space:nowrap">length - 16 ft</div>
<div class="a" style="left:686px;top:407px;width:21.8px;height:75.0px;background:#fde6a2;box-shadow:0 1px 1.5px rgba(0,0,0,.15);display:flex;align-items:center;justify-content:center;font-size:8.4px;line-height:1;color:#3a352a;-webkit-text-stroke:0.25px #3a352a;white-space:nowrap"><span style="display:inline-block;transform:rotate(90deg);white-space:nowrap">height - 6’ 6”</span></div>
<div class="a" style="left:686.1px;top:508px;width:21.9px;height:75.0px;background:#fde6a2;box-shadow:0 1px 1.5px rgba(0,0,0,.15);display:flex;align-items:center;justify-content:center;font-size:8.4px;line-height:1;color:#3a352a;-webkit-text-stroke:0.25px #3a352a;white-space:nowrap"><span style="display:inline-block;transform:rotate(90deg);white-space:nowrap">width 7’8”</span></div>
<div class="t" style="left:655px;top:460px;width:30px;text-align:center;font-size:8.4px;color:#333;-webkit-text-stroke:0.2px #333;transform:rotate(-90deg)">6’6”</div>
<div class="t" style="left:567px;top:521px;width:30px;text-align:center;font-size:8.4px;color:#333;-webkit-text-stroke:0.2px #333;transform:rotate(90deg)">piano</div>
<div class="t" style="left:447px;top:543px;width:30px;text-align:center;font-size:8.4px;color:#333;-webkit-text-stroke:0.2px #333;transform:rotate(90deg)">7’8”</div>
<div class="t" style="left:456.5px;top:598.5px;width:20px;text-align:center;font-size:7px;color:#444;-webkit-text-stroke:0.15px #444;transform:rotate(180deg)">2’</div>
<div class="t" style="left:512.5px;top:598.5px;width:20px;text-align:center;font-size:7px;color:#444;-webkit-text-stroke:0.15px #444;transform:rotate(180deg)">2’</div>
<div class="t" style="left:569px;top:598.5px;width:20px;text-align:center;font-size:7px;color:#444;-webkit-text-stroke:0.15px #444;transform:rotate(180deg)">2’</div>
<div class="t" style="left:625.4px;top:598.5px;width:20px;text-align:center;font-size:7px;color:#444;-webkit-text-stroke:0.15px #444;transform:rotate(180deg)">2’</div>
<div class="a" style="left:905.2px;top:370.3px;width:75.0px;height:75.5px;background:linear-gradient(#f9e2a0,#fde8a5 40%);box-shadow:0 3px 2.5px -1px rgba(0,0,0,.22);display:flex;align-items:center;justify-content:center;text-align:center;font-size:8.3px;line-height:10.1px;color:#3d382c;-webkit-text-stroke:0.2px #3d382c">jewelry box 22<br>inches long by 16<br>inches tall by 8<br>inches wide</div>
<div class="a" style="left:841.2px;top:446px;width:63.8px;height:63.0px;background:linear-gradient(#f9e2a0,#fde8a5 40%);box-shadow:0 3px 2.5px -1px rgba(0,0,0,.22);display:flex;align-items:center;justify-content:center;text-align:center;font-size:10.5px;line-height:12.7px;color:#3d382c;-webkit-text-stroke:0.2px #3d382c">bookshelves<br>- 1 ft wide,<br>25 in long, 5<br>ft 11 tall</div>
<div class="a" style="left:813.5px;top:539.6px;width:74.9px;height:74.9px;background:linear-gradient(#f9e2a0,#fde8a5 40%);box-shadow:0 3px 2.5px -1px rgba(0,0,0,.22);display:flex;align-items:center;justify-content:center;text-align:center;font-size:8.4px;line-height:10.2px;color:#3d382c;-webkit-text-stroke:0.2px #3d382c">mattress 57<br>inches wide, 75<br>inches long, 14<br>inches tall</div>
<div class="a" style="left:917.2px;top:549px;width:74.9px;height:75.1px;background:linear-gradient(#f9e2a0,#fde8a5 40%);box-shadow:0 3px 2.5px -1px rgba(0,0,0,.22);display:flex;align-items:center;justify-content:center;text-align:center;font-size:11px;line-height:13.2px;color:#3d382c;-webkit-text-stroke:0.2px #3d382c">box spring 57<br>inches wide<br>75 inches<br>long, 8 inches<br>tall</div>
<div class="a" style="left:841.5px;top:624.8px;width:75.3px;height:74.2px;background:linear-gradient(#f9e2a0,#fde8a5 40%);box-shadow:0 3px 2.5px -1px rgba(0,0,0,.22);display:flex;align-items:center;justify-content:center;text-align:center;font-size:8.4px;line-height:10.1px;color:#3d382c;-webkit-text-stroke:0.2px #3d382c">dresser 44 5<br>inches tall, 34<br>inches length, 16<br>inches width</div>

<!-- right tab & resize -->
<div class="a" style="left:1142px;top:147px;width:18px;height:40px;background:#e1e4e8;box-shadow:-1px 0 2px rgba(0,0,0,.1)"></div>
<svg style="left:1147px;top:158px" width="13" height="18" viewBox="0 0 13 18"><path d="M9 2 L2 9 L9 16 M2.5 9 H13" fill="none" stroke="#8b9099" stroke-width="3" stroke-linecap="round" stroke-linejoin="round"/></svg>
<svg style="left:1143px;top:784px" width="17" height="22" viewBox="0 0 17 22"><path d="M2.5 14 V2.5 H14 M3 3 L20 20" fill="none" stroke="#8b9099" stroke-width="2.8" stroke-linecap="round" stroke-linejoin="round"/></svg>
<!-- bottom bar -->
<div class="a" style="left:316px;top:817px;width:346px;height:32px;background:#eef0f2;box-shadow:0 2px 4px rgba(40,50,65,.35)"></div>
<div class="a" style="left:654px;top:817px;width:8px;height:32px;background:#c9ced5"></div>
<svg style="left:655px;top:829px" width="5" height="9" viewBox="0 0 5 9"><path d="M5 0 V9 L0 4.5 Z" fill="#333"/></svg>
<svg style="left:322px;top:823px" width="20" height="20" viewBox="-10 -10 20 20"><g fill="#48494c"><rect x="-2.9" y="-10" width="5.8" height="5" rx="0.6" transform="rotate(30)"/><rect x="-2.9" y="-10" width="5.8" height="5" rx="0.6" transform="rotate(90)"/><rect x="-2.9" y="-10" width="5.8" height="5" rx="0.6" transform="rotate(150)"/><rect x="-2.9" y="-10" width="5.8" height="5" rx="0.6" transform="rotate(210)"/><rect x="-2.9" y="-10" width="5.8" height="5" rx="0.6" transform="rotate(270)"/><rect x="-2.9" y="-10" width="5.8" height="5" rx="0.6" transform="rotate(330)"/><path fill-rule="evenodd" d="M0 -7.2 A7.2 7.2 0 1 1 0 7.2 A7.2 7.2 0 1 1 0 -7.2 Z M0 -2.6 A2.6 2.6 0 1 0 0 2.6 A2.6 2.6 0 1 0 0 -2.6 Z"/></g></svg>
<div class="t" style="left:353px;top:828px;font-size:12px;color:#4a4e55">Units:</div>
<div class="a" style="left:392px;top:822px;width:46px;height:23px;background:#fff"></div>
<div class="t" style="left:398px;top:828px;font-size:12px;color:#4a4e55">ft</div>
<svg style="left:429px;top:828px" width="5" height="10" viewBox="0 0 5 10"><path d="M0 4 H5 L2.5 0.5 Z M0 6 H5 L2.5 9.5 Z" fill="#333"/></svg>
<div class="a" style="left:451px;top:821px;width:1px;height:25px;background:#c3c7cd"></div>
<div class="t" style="left:462px;top:828px;font-size:12px;color:#4a4e55">Scale:</div>
<div class="a" style="left:502px;top:821px;width:48px;height:25px;background:#fff;border:1px solid #cfd3d8"></div>
<div class="t" style="left:556px;top:828px;font-size:12px;color:#4a4e55">in =</div>
<div class="a" style="left:581px;top:821px;width:48px;height:25px;background:#fff;border:1px solid #cfd3d8"></div>
<div class="t" style="left:635px;top:828px;font-size:12px;color:#4a4e55">ft</div>
</body></html>
